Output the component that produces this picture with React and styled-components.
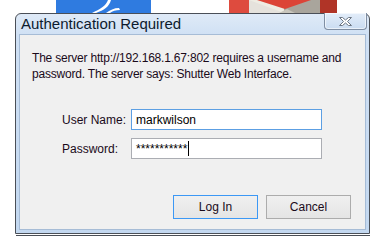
import React from "react";
import styled, { createGlobalStyle } from "styled-components";

const GlobalStyle = createGlobalStyle`
  *, *::before, *::after {
    box-sizing: border-box;
  }
  html, body {
    margin: 0;
    padding: 0;
    background: #ffffff;
  }
  body {
    font-family: "Liberation Sans", Arial, sans-serif;
  }
`;

const App = () => {
  return (
    <Desktop>
      <GlobalStyle />
      <IconStrip>
        <BlueIcon />
        <MailIcon />
      </IconStrip>
      <Window>
        <TitleBar>
          <Title>Authentication Required</Title>
          <CloseButton aria-label="Close">
            <CloseGlyph />
          </CloseButton>
        </TitleBar>
        <Client>
          <Message>
            The server http://192.168.1.67:802 requires a username and
            <br />
            password. The server says: Shutter Web Interface.
          </Message>
          <Form>
            <Label>User Name:</Label>
            <Field focused>markwilson</Field>
            <Label>Password:</Label>
            <Field>
              ***********
              <Caret />
            </Field>
          </Form>
          <Buttons>
            <Button primary>Log In</Button>
            <Button>Cancel</Button>
          </Buttons>
        </Client>
      </Window>
      <Shadow />
    </Desktop>
  );
};

export default App;

const BlueIcon = () => (
  <svg width="95" height="13" viewBox="0 0 95 13">
    <rect width="95" height="13" fill="#2f7be0" />
    <path d="M36 13 C44 9 50 6 52 0 L55 0 C53 7 48 10 40 13 Z" fill="#ffffff" />
    <path d="M50 13 C54 10 58 8 63 8 L64 10 C60 10 56 11 54 13 Z" fill="#ffffff" />
  </svg>
);

const MailIcon = () => (
  <svg width="108" height="13" viewBox="0 0 108 13">
    <rect width="108" height="13" fill="#e5e2dc" />
    <rect x="0" width="20" height="13" fill="#de4b3e" />
    <rect x="55" width="36" height="13" fill="#a9a59c" />
    <path d="M20 0 L55 0 L55 13 Z" fill="#eeece3" />
    <path d="M28 0 L82 0 L56 9 Z" fill="#dc4437" />
    <path d="M50 13 L58 9 L66 13 Z" fill="#c9c6bc" />
    <rect x="91" width="17" height="13" fill="#b03427" />
  </svg>
);

const CloseGlyph = () => (
  <svg width="15" height="11" viewBox="0 0 15 11">
    <path
      d="M1.5 1.5 L4.5 1.5 L7.5 4 L10.5 1.5 L13.5 1.5 L9.5 5.5 L13.5 9.5 L10.5 9.5 L7.5 7 L4.5 9.5 L1.5 9.5 L5.5 5.5 Z"
      fill="#ffffff"
      stroke="#6d7683"
      strokeWidth="1"
      strokeLinejoin="round"
    />
  </svg>
);

const Desktop = styled.div`
  position: relative;
  width: 386px;
  height: 249px;
  overflow: hidden;
  background: #ffffff;
`;

const IconStrip = styled.div`
  display: flex;
  height: 13px;
  padding-left: 56px;
  gap: 78px;
  line-height: 0;
`;

const Window = styled.div`
  display: flex;
  flex-direction: column;
  width: 355px;
  height: 221px;
  margin-left: 15px;
  border: 1px solid #4a4f57;
  border-radius: 6px 6px 0 0;
  background: linear-gradient(to bottom, #dfeaf7 0%, #cfe0f4 10%, #c3d8f0 100%);
  padding: 0 3px 3px 3px;
`;

const TitleBar = styled.div`
  display: flex;
  align-items: flex-start;
  justify-content: space-between;
  height: 20px;
`;

const Title = styled.div`
  padding: 1px 0 0 2px;
  font-family: "Liberation Sans", Arial, sans-serif;
  font-size: 15px;
  line-height: 18px;
  color: #0d1b2e;
`;

const CloseButton = styled.div`
  display: flex;
  align-items: center;
  justify-content: center;
  width: 43px;
  height: 17px;
  margin: -1px -1px 0 0;
  border: 1px solid #7f8ea3;
  border-top: none;
  border-radius: 0 0 4px 4px;
  background: linear-gradient(to bottom, #e3edf9, #cadcf1);
  box-shadow: inset 0 0 0 1px rgba(255, 255, 255, 0.6);
`;

const Client = styled.div`
  flex: 1;
  display: flex;
  flex-direction: column;
  background: #f0f0f0;
  border: 1px solid #a6bcd6;
  padding: 15px 14px 10px 12px;
`;

const Message = styled.p`
  margin: 0;
  font-size: 12px;
  line-height: 16px;
  letter-spacing: -0.2px;
  color: #1a0a1a;
`;

const Form = styled.div`
  display: grid;
  grid-template-columns: 69px 191px;
  grid-auto-rows: 21px;
  row-gap: 8px;
  align-items: center;
  margin: 27px 0 0 30px;
`;

const Label = styled.span`
  font-size: 12px;
  color: #1a0a1a;
`;

const Field = styled.div`
  display: flex;
  align-items: center;
  height: 21px;
  padding: 0 4px;
  background: #ffffff;
  border: 1px solid ${props => (props.focused ? "#5c9fe3" : "#abadb3")};
  font-size: 12px;
  color: #000000;
`;

const Caret = styled.span`
  display: inline-block;
  width: 1px;
  height: 15px;
  margin-left: 1px;
  background: #000000;
`;

const Buttons = styled.div`
  display: flex;
  justify-content: flex-end;
  gap: 8px;
  margin-top: auto;
`;

const Button = styled.div`
  display: flex;
  align-items: center;
  justify-content: center;
  width: 85px;
  height: 24px;
  border: 1px solid ${props => (props.primary ? "#3c98f5" : "#acacac")};
  background: linear-gradient(to bottom, #f0f0f0, #e5e5e5);
  font-size: 12px;
  color: #1a0a1a;
`;

const Shadow = styled.div`
  width: 354px;
  height: 1px;
  margin-left: 16px;
  margin-top: 1px;
  background: #4a4f57;
`;
